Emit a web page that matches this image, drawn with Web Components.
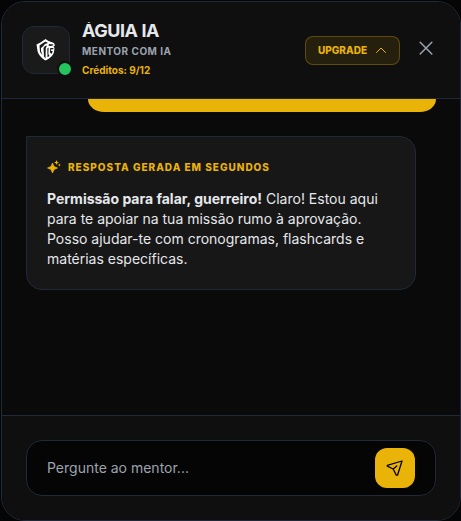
<!DOCTYPE html>
<html lang="pt">
<head>
<meta charset="utf-8">
<meta name="viewport" content="width=device-width, initial-scale=1">
<title>Águia IA</title>
<style>
  html, body { height: 100%; }
  body {
    margin: 0; padding: 1px 0 0 1px; box-sizing: border-box; background: #050505;
    font-family: Inter, "Liberation Sans", sans-serif; color: #e5e7eb;
    --line: #1f2937; --gold: #eab308; --muted: #9ca3af; --bar: #0f0f0f;
  }
</style>
</head>
<body>
<chat-panel>
  <chat-header slot="header" name="ÁGUIA IA" role-text="MENTOR COM IA" credits="Créditos: 9/12"></chat-header>
  <user-bubble></user-bubble>
  <mentor-reply label="RESPOSTA GERADA EM SEGUNDOS"><strong>Permissão para falar, guerreiro!</strong> Claro! Estou aqui para te apoiar na tua missão rumo à aprovação. Posso ajudar-te com cronogramas, flashcards e matérias específicas.</mentor-reply>
  <chat-composer slot="footer"></chat-composer>
</chat-panel>
<script>
function define(name, html) {
  customElements.define(name, class extends HTMLElement {
    constructor() {
      super();
      const root = this.attachShadow({ mode: "open" });
      root.innerHTML = html;
      root.querySelectorAll("[data-attr]").forEach(el => {
        el.textContent = this.getAttribute(el.dataset.attr);
      });
    }
  });
}

define("chat-panel", `
<style>
  :host { display: flex; flex-direction: column; box-sizing: border-box; height: 100%;
    border: 1px solid var(--line); border-radius: 24px; overflow: hidden; background: #0a0a0a; }
  main { flex: 1; min-height: 0; overflow: hidden; display: flex; flex-direction: column;
    gap: 24px; padding: 0 24px; }
</style>
<slot name="header"></slot>
<main><slot></slot></main>
<slot name="footer"></slot>`);

define("eagle-avatar", `
<style>
  :host { display: grid; place-items: center; position: relative; box-sizing: border-box; flex: none;
    width: 48px; height: 48px; border: 1px solid var(--line); border-radius: 12px; background: #1a1a1a; }
  i { position: absolute; right: -4px; bottom: -4px; width: 12px; height: 12px; border-radius: 50%;
    background: #22c55e; border: 2px solid var(--bar); }
</style>
<svg width="20" height="22" viewBox="0 0 20 22" aria-hidden="true">
  <path fill="#fff" d="M9.500 0 12.500 2 18 4 19 6.500 17.500 7.500 18.500 9 18 13C17 17 13.500 19.500 9.500 21.500 6 19.500 2.500 16 1.500 12L.5 5.500 4.500 3.500Z"/>
  <path fill="#1a1a1a" d="M3.500 6.500 5.500 5 9.500 2.500 12 4 9 5 7 7.500 5 9 5 12 6.500 16 4 13Z"/>
  <path fill="#1a1a1a" d="M7.500 9 9 7 11 6.500 9.800 9 9.500 19.500 8 17.500ZM11.300 9.500 12.600 8.500 12.400 15 13.500 17 11.500 18.300ZM13 5 17.500 5.500 17 6.500 14 7 12.500 6.500ZM14.200 9 17.500 9 17.300 10.300 15.300 10.300 15 12 16.800 12 15.500 15 14 13.500Z"/>
</svg><i></i>`);

define("chat-header", `
<style>
  :host { display: flex; align-items: center; gap: 12px; box-sizing: border-box; height: 97px;
    padding: 0 20px; background: var(--bar); border-bottom: 1px solid var(--line); }
  .who { flex: 1; min-width: 0; display: flex; flex-direction: column; }
  h1, p { margin: 0; white-space: nowrap; }
  h1 { font-size: 18px; line-height: 18px; font-weight: 700; overflow: hidden; letter-spacing: -.025em; }
  p { font-size: 10px; line-height: 15px; font-weight: 700; }
  .role { color: var(--muted); letter-spacing: .05em; margin-top: 4px; }
  .credits { color: var(--gold); margin-top: 4px; }
  button { font: inherit; cursor: pointer; }
  .upgrade { display: flex; align-items: center; gap: 8px; box-sizing: border-box; height: 29px; padding: 0 12px;
    font-size: 10px; font-weight: 800; color: var(--gold); border-radius: 8px;
    background: rgba(234,179,8,.1); border: 1px solid rgba(234,179,8,.3); }
  .close { display: grid; padding: 4px; border: 0; background: none; color: var(--muted); margin-bottom: 2px; }
</style>
<eagle-avatar></eagle-avatar>
<div class="who">
  <h1 data-attr="name"></h1>
  <p class="role" data-attr="role-text"></p>
  <p class="credits" data-attr="credits"></p>
</div>
<button class="upgrade" type="button">UPGRADE
  <svg width="12" height="12" viewBox="0 0 12 12" fill="none" stroke="currentColor" stroke-linecap="round" stroke-linejoin="round" aria-hidden="true"><path d="M1.500 8.500 6 4l4.500 4.500"/></svg>
</button>
<button class="close" type="button" aria-label="Fechar">
  <svg width="20" height="20" viewBox="0 0 24 24" fill="none" stroke="currentColor" stroke-width="1.800" stroke-linecap="round" aria-hidden="true"><path d="M5 4l14 14M19 4L5 18"/></svg>
</button>`);

define("user-bubble", `
<style>
  :host { display: block; flex: none; align-self: flex-end; width: 85%; height: 13px;
    background: var(--gold); border-radius: 0 0 16px 16px / 0 0 13px 13px; }
</style>`);

define("mentor-reply", `
<style>
  :host { display: block; box-sizing: border-box; width: 95%; padding: 20px;
    background: #171717; border: 1px solid var(--line); border-radius: 0 16px 16px 16px; }
  header { display: flex; align-items: center; gap: 7px; margin-bottom: 12px; color: var(--gold);
    font-size: 10px; line-height: 20px; font-weight: 800; letter-spacing: .1em; }
  p { margin: 0; font-size: 14px; line-height: 20px; font-weight: 400; }
  ::slotted(strong) { font-weight: 700; }
</style>
<header>
  <svg width="14" height="14" viewBox="0 0 14 14" fill="currentColor" aria-hidden="true">
    <path stroke="currentColor" stroke-width=".7" stroke-linejoin="round" d="M5.500 3 7 6.500 10.500 8 7 9.500 5.500 13 4 9.500 .5 8 4 6.500Z"/>
    <path d="M9.500 0 10.200 1.800 12 2.500 10.200 3.200 9.500 5 8.800 3.200 7 2.500 8.800 1.800Z"/>
    <path d="M12.300 3.500 12.800 4.500 13.800 5 12.800 5.500 12.300 6.500 11.800 5.500 10.800 5 11.800 4.500Z"/>
  </svg>
  <span data-attr="label"></span>
</header>
<p><slot></slot></p>`);

define("chat-composer", `
<style>
  :host { display: block; padding: 24px; background: var(--bar); border-top: 1px solid var(--line); }
  form { display: flex; align-items: center; box-sizing: border-box; height: 56px; padding: 0 20px;
    background: #050505; border: 1px solid var(--line); border-radius: 16px; }
  input { flex: 1; min-width: 0; padding: 0; border: 0; outline: 0; background: none; color: inherit;
    font: 400 14px/20px Inter, "Liberation Sans", sans-serif; }
  input::placeholder { color: var(--muted); opacity: 1; }
  button { display: grid; place-items: center; flex: none; width: 40px; height: 40px; padding: 0;
    border: 0; border-radius: 12px; background: var(--gold); color: #000; cursor: pointer; }
</style>
<form>
  <input type="text" placeholder="Pergunte ao mentor..." aria-label="Pergunte ao mentor">
  <button type="button" aria-label="Enviar">
    <svg width="18" height="18" viewBox="0 0 18 18" fill="none" stroke="currentColor" stroke-width="1.300" stroke-linecap="round" stroke-linejoin="round" aria-hidden="true"><path d="M16 2 1.300 6.300 1.300 7.200 7.200 10 10.300 16.200 11.500 16.200ZM7.200 10 10.800 7"/></svg>
  </button>
</form>`);
</script>
</body>
</html>
